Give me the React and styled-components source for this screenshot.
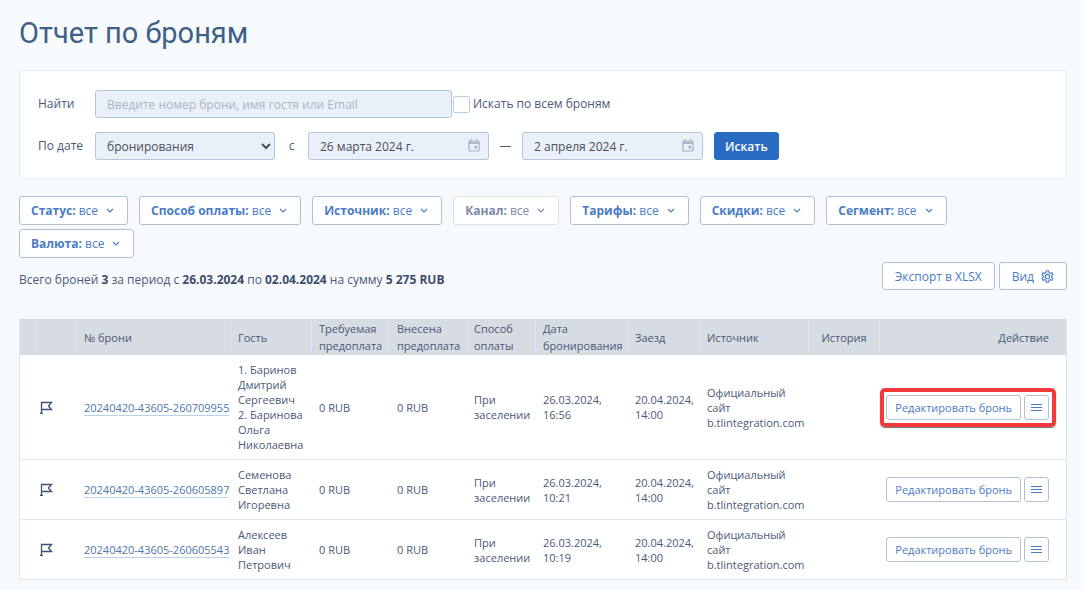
import React from "react";
import styled, { createGlobalStyle } from "styled-components";

const GlobalStyle = createGlobalStyle`
  * {
    box-sizing: border-box;
  }
  body {
    margin: 0;
    min-height: 100vh;
    background: #f6fafd;
    color: #4a5a78;
    font-family: "Open Sans", "Noto Sans", sans-serif;
    font-size: 12px;
    line-height: 16px;
  }
  button, input, select {
    font-family: inherit;
    font-size: 12px;
    margin: 0;
  }
`;

const filters = [
  { name: "Статус" },
  { name: "Способ оплаты" },
  { name: "Источник" },
  { name: "Канал", disabled: true },
  { name: "Тарифы" },
  { name: "Скидки" },
  { name: "Сегмент" },
  { name: "Валюта" },
];

const bookings = [
  {
    id: "20240420-43605-260709955",
    guests: ["1. Баринов Дмитрий Сергеевич", "2. Баринова Ольга Николаевна"],
    created: "26.03.2024, 16:56",
    highlighted: true,
  },
  {
    id: "20240420-43605-260605897",
    guests: ["Семенова Светлана Игоревна"],
    created: "26.03.2024, 10:21",
  },
  {
    id: "20240420-43605-260605543",
    guests: ["Алексеев Иван Петрович"],
    created: "26.03.2024, 10:19",
  },
];

const Chevron = () => (
  <svg width="8" height="6" viewBox="0 0 8 6" fill="none" stroke="currentColor" strokeWidth="1.1">
    <path d="M1 1l3 3 3-3" />
  </svg>
);

const CalendarIcon = () => (
  <svg width="12" height="13" viewBox="0 0 12 13" fill="none" stroke="currentColor">
    <rect x="1" y="2" width="10" height="10" rx="1" strokeWidth="1.2" />
    <path d="M1 4h10" strokeWidth="1.8" />
    <path d="M3 0v2M9 0v2" strokeWidth="1.4" />
    <rect x="6.500" y="7" width="2.500" height="2.500" fill="currentColor" stroke="none" />
  </svg>
);

const GearIcon = () => (
  <svg width="13" height="13" viewBox="0 0 24 24" fill="none" stroke="currentColor" strokeWidth="2">
    <circle cx="12" cy="12" r="4" />
    <path d="M10 1.5h4l.7 3.3 2.2 1.3 3.2-1.1 2 3.5-2.5 2.2v2.6l2.5 2.2-2 3.5-3.2-1.1-2.2 1.3-.7 3.300h-4l-.7-3.300-2.200-1.300L3.900 19l-2-3.500 2.500-2.200v-2.600L1.900 8.500l2-3.500 3.200 1.100 2.200-1.300z" />
  </svg>
);

const FlagIcon = () => (
  <svg width="13" height="13" viewBox="0 0 13 13" fill="none" stroke="#3d5175" strokeWidth="1.3">
    <path d="M0 12.400h3M1.500 13V1.500h10L8.500 5l3 3.500h-10" />
  </svg>
);

const MenuIcon = () => (
  <svg width="11" height="9" viewBox="0 0 11 9" stroke="currentColor" strokeWidth="1">
    <path d="M0 1.500h11M0 4.500h11M0 7.500h11" />
  </svg>
);

const DateInput = ({ id, label, value }) => (
  <DateBox>
    <Field id={id} aria-label={label} type="text" defaultValue={value} />
    <CalendarIcon />
  </DateBox>
);

const App = () => {
  return (
    <Page>
      <GlobalStyle />
      <Title>Отчет по броням</Title>

      <SearchCard>
        <FormRow>
          <Label htmlFor="query">Найти</Label>
          <QueryField id="query" type="text" placeholder="Введите номер брони, имя гостя или Email" />
          <CheckLabel>
            <Checkbox type="checkbox" />
            Искать по всем броням
          </CheckLabel>
        </FormRow>
        <FormRow>
          <Label htmlFor="dateKind">По дате</Label>
          <SelectField id="dateKind" defaultValue="booking">
            <option value="booking">бронирования</option>
            <option value="arrival">заезда</option>
          </SelectField>
          <Separator>с</Separator>
          <DateInput id="from" label="Дата с" value="26 марта 2024 г." />
          <Separator>—</Separator>
          <DateInput id="to" label="Дата по" value="2 апреля 2024 г." />
          <SearchButton type="button">Искать</SearchButton>
        </FormRow>
      </SearchCard>

      <Filters>
        {filters.map((f) => (
          <FilterButton key={f.name} type="button" disabled={f.disabled}>
            <span>
              <b>{f.name}:</b> все
            </span>
            <Chevron />
          </FilterButton>
        ))}
      </Filters>

      <Summary>
        <p>
          Всего броней <b>3</b> за период с <b>26.03.2024</b> по <b>02.04.2024</b> на сумму{" "}
          <b>5 275 RUB</b>
        </p>
        <SummaryButtons>
          <ToolButton type="button">Экспорт в XLSX</ToolButton>
          <ToolButton type="button">
            Вид <GearIcon />
          </ToolButton>
        </SummaryButtons>
      </Summary>

      <Table>
        <colgroup>
          <Col $w={17} />
          <Col $w={40} />
          <Col $w={154} />
          <Col $w={81} />
          <Col $w={78} />
          <Col $w={77} />
          <Col $w={69} />
          <Col $w={92} />
          <Col $w={72} />
          <Col $w={109} />
          <Col $w={71} />
          <col />
        </colgroup>
        <thead>
          <tr>
            <th />
            <th />
            <th>№ брони</th>
            <th>Гость</th>
            <th>Требуемая предоплата</th>
            <th>Внесена предоплата</th>
            <th>Способ оплаты</th>
            <th>Дата бронирования</th>
            <th>Заезд</th>
            <th>Источник</th>
            <HistoryHead>История</HistoryHead>
            <ActionHead>Действие</ActionHead>
          </tr>
        </thead>
        <tbody>
          {bookings.map((b) => (
            <tr key={b.id}>
              <td />
              <FlagCell>
                <FlagIcon />
              </FlagCell>
              <td>
                <BookingLink href="#">{b.id}</BookingLink>
              </td>
              <td>
                {b.guests.map((g) => (
                  <div key={g}>{g}</div>
                ))}
              </td>
              <td>0 RUB</td>
              <td>0 RUB</td>
              <td>При заселении</td>
              <td>{b.created}</td>
              <td>20.04.2024, 14:00</td>
              <td>Официальный сайт b.tlintegration.com</td>
              <td />
              <ActionCell>
                <Actions $highlighted={b.highlighted}>
                  <RowButton type="button">Редактировать бронь</RowButton>
                  <MenuButton type="button" aria-label="Меню">
                    <MenuIcon />
                  </MenuButton>
                </Actions>
              </ActionCell>
            </tr>
          ))}
        </tbody>
      </Table>
    </Page>
  );
};

export default App;

const Page = styled.main`
  padding: 15px 17px 9px 19px;
`;

const Title = styled.h1`
  margin: 0 0 19px;
  color: #3f5f87;
  font-family: Roboto, "Open Sans", sans-serif;
  font-size: 29px;
  font-weight: 400;
  line-height: 36px;
`;

const SearchCard = styled.form`
  display: flex;
  flex-direction: column;
  gap: 14px;
  padding: 19px 18px 18px;
  background: #fff;
  border: 1px solid #e6eef5;
  border-radius: 3px;
`;

const FormRow = styled.div`
  display: flex;
  align-items: center;
`;

const Label = styled.label`
  width: 57px;
`;

const Field = styled.input`
  width: 100%;
  height: 28px;
  padding: 0 11px;
  color: #4a4f58;
  background: #e9f0f9;
  border: 1px solid #b9c3d6;
  border-radius: 3px;

  &::placeholder {
    color: #a9b5c8;
    opacity: 1;
  }
`;

const QueryField = styled(Field)`
  width: 357px;
`;

const SelectField = styled(Field).attrs({ as: "select" })`
  width: 180px;
  padding: 0 0 0 7px;
`;

const DateBox = styled.div`
  position: relative;
  width: 181px;
  color: #a5b0c3;

  svg {
    position: absolute;
    top: 7px;
    right: 9px;
  }
`;

const CheckLabel = styled.label`
  display: flex;
  align-items: center;
  gap: 3px;
  margin-left: 1px;
`;

const Checkbox = styled.input`
  appearance: none;
  width: 17px;
  height: 17px;
  background: #fff;
  border: 1px solid #b3d0ea;
  border-radius: 2px;

  &:checked {
    background: #286bc3;
  }
`;

const Separator = styled.span`
  width: 33px;
  text-align: center;
`;

const SearchButton = styled.button`
  height: 28px;
  margin-left: 11px;
  padding: 0 10px;
  color: #fff;
  background: #286bc3;
  border: 1px solid #286bc3;
  border-radius: 3px;
  font-weight: 600;
`;

const OutlineButton = styled.button`
  display: inline-flex;
  align-items: center;
  color: #4a7cc7;
  background: #fff;
  border: 1px solid #b4c0d1;
  border-radius: 3px;
  white-space: nowrap;
`;

const Filters = styled.div`
  display: flex;
  flex-wrap: wrap;
  gap: 4px 11px;
  margin-top: 17px;
`;

const FilterButton = styled(OutlineButton)`
  gap: 8px;
  height: 29px;
  padding: 0 13px 0 11px;

  &:disabled {
    color: #7c8aa5;
    border-color: #dde3ea;
  }
`;

const Summary = styled.div`
  display: flex;
  align-items: center;
  justify-content: space-between;
  margin: 4px 0 29px;

  p {
    margin: 8px 0 0;
  }
  b {
    color: #3d4c6b;
  }
`;

const SummaryButtons = styled.div`
  display: flex;
  gap: 4px;
`;

const ToolButton = styled(OutlineButton)`
  gap: 7px;
  height: 28px;
  padding: 0 12px;
`;

const Table = styled.table`
  width: 100%;
  table-layout: fixed;
  border-collapse: separate;
  border-spacing: 0;
  background: #fff;
  border: 1px solid #e1e6ec;
  border-top: 0;
  font-size: 11px;
  line-height: 15px;

  th {
    height: 36px;
    padding: 0 0 0 7px;
    text-align: left;
    font-weight: 400;
    line-height: 17px;
    background: #d7dbe2;
    border-right: 1px solid #dfe3e9;
  }
  th:last-child {
    border-right: 0;
  }
  td {
    padding: 7px 0 7px 7px;
    border-bottom: 1px solid #e1e6ec;
  }
  tbody tr:last-child td {
    border-bottom: 0;
  }
`;

const Col = styled.col`
  width: ${({ $w }) => $w}px;
`;

const HistoryHead = styled.th`
  && {
    text-align: center;
    padding: 0;
  }
`;

const ActionHead = styled.th`
  && {
    text-align: right;
    padding-right: 17px;
  }
`;

const FlagCell = styled.td`
  && {
    padding-left: 3px;
  }
  svg {
    display: block;
  }
`;

const BookingLink = styled.a`
  color: #4a78ad;
  text-decoration: none;
  border-bottom: 1px solid #b9d3ec;
`;

const ActionCell = styled.td`
  && {
    padding-left: 0;
    padding-right: 17px;
    text-align: right;
  }
`;

const Actions = styled.div`
  position: relative;
  display: inline-flex;
  gap: 3px;
  vertical-align: middle;

  &::after {
    content: "";
    display: ${({ $highlighted }) => ($highlighted ? "block" : "none")};
    position: absolute;
    inset: -7px -7px -7px -6px;
    border: 4px solid #f23a3a;
    border-radius: 5px;
    box-shadow: 0 1px 1px #6b6f75;
    pointer-events: none;
  }
`;

const RowButton = styled(OutlineButton)`
  height: 25px;
  padding: 0 8px;
  font-size: 11px;
`;

const MenuButton = styled(OutlineButton)`
  justify-content: center;
  width: 25px;
  height: 25px;
  padding: 0;
`;
